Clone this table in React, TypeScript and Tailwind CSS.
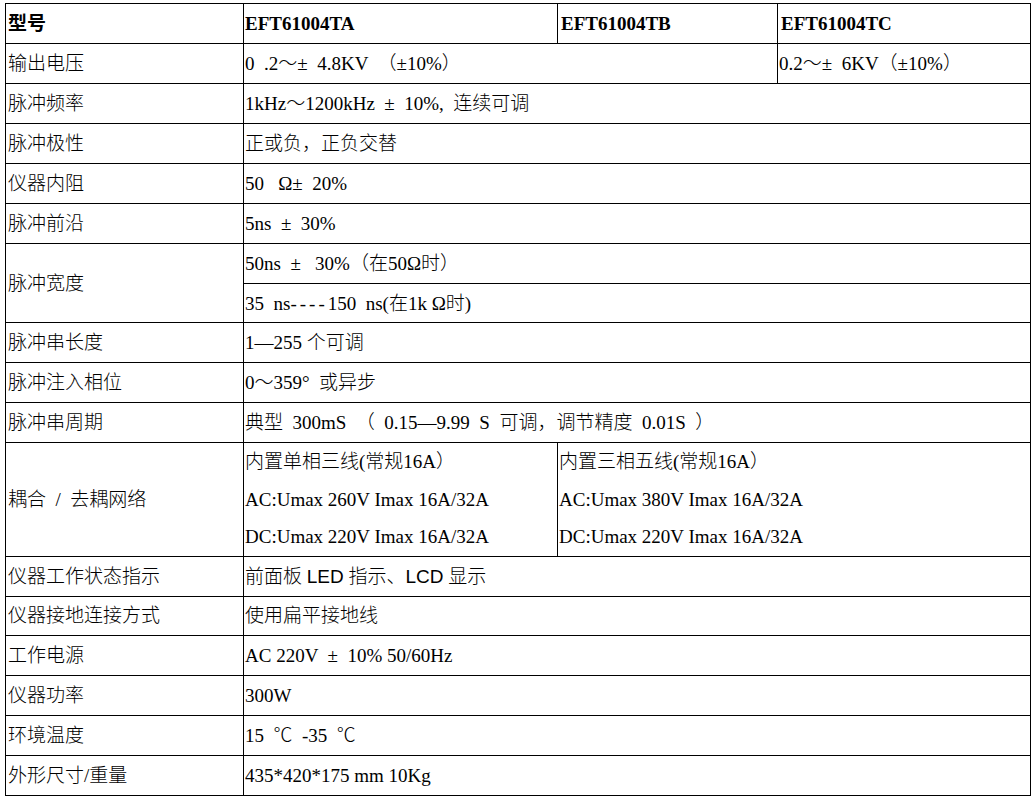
const rows: [string, string][] = [
  ["脉冲频率", "1kHz～1200kHz  ±  10%,  连续可调"],
  ["脉冲极性", "正或负，正负交替"],
  ["仪器内阻", "50   Ω±  20%"],
  ["脉冲前沿", "5ns  ±  30%"],
];

const rowsMid: [string, string][] = [
  ["脉冲串长度", "1—255 个可调"],
  ["脉冲注入相位", "0～359°  或异步"],
  ["脉冲串周期", "典型  300mS  （  0.15—9.99  S  可调，调节精度  0.01S  ）"],
];

const rowsEnd: [string, React.ReactNode][] = [
  [
    "仪器工作状态指示",
    <>
      前面板 <span className="font-['Liberation_Sans']">LED</span> 指示、
      <span className="font-['Liberation_Sans']">LCD</span> 显示
    </>,
  ],
  ["仪器接地连接方式", "使用扁平接地线"],
  ["工作电源", "AC 220V  ±  10% 50/60Hz"],
  ["仪器功率", "300W"],
  ["环境温度", "15  ℃  -35  ℃"],
  ["外形尺寸/重量", "435*420*175 mm 10Kg"],
];

const label = "border border-black pl-[2px] align-middle whitespace-pre";
const cell = "border border-black pl-[1px] align-middle whitespace-pre";

function Row({ name, value, h = "h-[40px]" }: { name: string; value: React.ReactNode; h?: string }) {
  return (
    <tr className={h}>
      <td className={label}>{name}</td>
      <td className={cell} colSpan={3}>
        {value}
      </td>
    </tr>
  );
}

export default function App() {
  return (
    <div className="min-h-screen bg-white pt-[3px] pl-[5px] text-black font-['Liberation_Serif','Noto_Sans_CJK_SC',serif] text-[19px] font-light leading-none">
      <table className="w-[1025px] table-fixed border-collapse">
        <colgroup>
          <col className="w-[238px]" />
          <col className="w-[314px]" />
          <col className="w-[220px]" />
          <col className="w-[253px]" />
        </colgroup>
        <tbody>
          <tr className="h-[40px] font-bold">
            <td className={label}>型号</td>
            <td className={cell}>EFT61004TA</td>
            <td className={cell + " pl-[3px]"}>EFT61004TB</td>
            <td className={cell + " pl-[3px]"}>EFT61004TC</td>
          </tr>
          <tr className="h-[40px]">
            <td className={label}>输出电压</td>
            <td className={cell} colSpan={2}>
              0  .2～±  4.8KV  （±10%）
            </td>
            <td className={cell}>0.2～±  6KV（±10%）</td>
          </tr>
          {rows.map(([n, v]) => (
            <Row key={n} name={n} value={v} />
          ))}
          <tr className="h-[40px]">
            <td className={label} rowSpan={2}>
              脉冲宽度
            </td>
            <td className={cell} colSpan={3}>
              50ns  ±   30%（在50Ω时）
            </td>
          </tr>
          <tr className="h-[39px]">
            <td className={cell} colSpan={3}>
              35  ns<span className="tracking-[3px]">----</span>150  ns(在1k Ω时)
            </td>
          </tr>
          {rowsMid.map(([n, v]) => (
            <Row key={n} name={n} value={v} />
          ))}
          <tr className="h-[113px]">
            <td className={label}>耦合  /  去耦网络</td>
            <td className={cell + " leading-[37.5px]"}>
              <div>内置单相三线(常规16A）</div>
              <div>AC:Umax 260V Imax 16A/32A</div>
              <div>DC:Umax 220V Imax 16A/32A</div>
            </td>
            <td className={cell + " leading-[37.5px]"} colSpan={2}>
              <div>内置三相五线(常规16A）</div>
              <div>AC:Umax 380V Imax 16A/32A</div>
              <div>DC:Umax 220V Imax 16A/32A</div>
            </td>
          </tr>
          {rowsEnd.map(([n, v], i) => (
            <Row key={n} name={n} value={v} h={i === 1 ? "h-[39px]" : "h-[40px]"} />
          ))}
        </tbody>
      </table>
    </div>
  );
}
